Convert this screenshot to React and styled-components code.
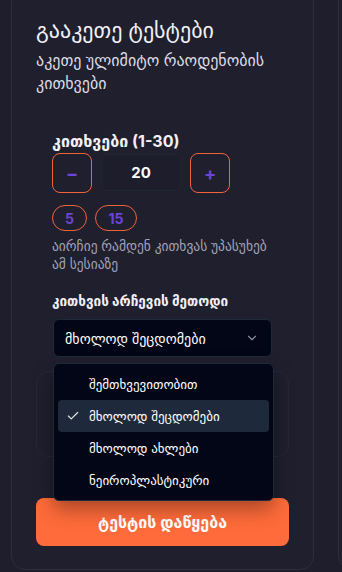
import React, { useState } from 'react';
import styled, { createGlobalStyle } from 'styled-components';

const colors = {
  page: '#1e1e2d',
  card: '#1f1f2e',
  cardBorder: '#2d2d40',
  text: '#f1f1f5',
  muted: '#a3a3b5',
  orange: '#ff6b3a',
  orangeBorder: '#f0643a',
  purple: '#6c44d8',
  field: '#020617',
  fieldBorder: '#1e293b',
  itemActive: '#1e293b',
};

const GlobalStyle = createGlobalStyle`
  * { box-sizing: border-box; }
  html, body {
    margin: 0;
    padding: 0;
    background: ${colors.page};
    font-family: Inter, "DejaVu Sans", sans-serif;
    color: ${colors.text};
    overflow: hidden;
  }
`;

const PageWrapper = styled.div`
  display: flex;
  gap: 24px;
  padding: 0 0 0 11px;
  width: 342px;
  height: 572px;
  overflow: hidden;
`;

const Card = styled.section`
  flex: 0 0 303px;
  margin-top: -12px;
  height: 582px;
  background: ${colors.card};
  border: 1px solid ${colors.cardBorder};
  border-radius: 14px;
  padding: 27px 24px 0;
`;

const Title = styled.h2`
  margin: 0;
  font-size: 22px;
  line-height: 28px;
  font-weight: 400;
  color: ${colors.text};
`;

const Subtitle = styled.p`
  margin: 5px 0 0;
  font-size: 16px;
  line-height: 23px;
  color: #dcdce6;
`;

const Section = styled.div`
  padding: 0 16px;
  margin-top: 36px;
`;

const Label = styled.div`
  font-size: 16px;
  font-weight: 700;
  line-height: 20px;
  color: ${colors.text};
`;

const StepperRow = styled.div`
  display: flex;
  gap: 9px;
  margin-top: 2px;
`;

const StepButton = styled.button`
  width: 40px;
  height: 40px;
  border: 1px solid ${colors.orangeBorder};
  border-radius: 8px;
  background: transparent;
  color: ${colors.purple};
  font-family: Inter, sans-serif;
  font-size: 18px;
  font-weight: 700;
  display: flex;
  align-items: center;
  justify-content: center;
  padding: 0;
`;

const CountBox = styled.div`
  width: 80px;
  height: 37px;
  margin-top: 1px;
  border: 1px solid #1f2636;
  border-radius: 7px;
  background: #1d1d2c;
  display: flex;
  align-items: center;
  justify-content: center;
  font-family: Inter, sans-serif;
  font-weight: 700;
  font-size: 15px;
  color: #fff;
`;

const ChipRow = styled.div`
  display: flex;
  gap: 8px;
  margin-top: 12px;
`;

const Chip = styled.button`
  height: 26px;
  padding: 0 12px;
  min-width: ${(p) => (p.$wide ? '42px' : '34px')};
  border: 1px solid ${colors.orangeBorder};
  border-radius: 13px;
  background: transparent;
  color: ${colors.purple};
  font-family: Inter, sans-serif;
  font-weight: 700;
  font-size: 14px;
`;

const Help = styled.p`
  margin: 6px 0 0;
  font-size: 13.5px;
  line-height: 18px;
  color: ${colors.muted};
`;

const MethodLabel = styled(Label)`
  font-size: 13.5px;
  margin-top: 18px;
`;

const SelectWrap = styled.div`
  position: relative;
  margin-top: 8px;
`;

const Trigger = styled.div`
  height: 38px;
  margin-left: 1px;
  width: 219px;
  background: ${colors.field};
  border: 1px solid ${colors.fieldBorder};
  border-radius: 6px;
  display: flex;
  align-items: center;
  justify-content: space-between;
  padding: 0 12px 0 11px;
  font-size: 14px;
  color: #fff;
`;

const Popover = styled.ul`
  position: absolute;
  top: 44px;
  left: 1px;
  width: 221px;
  margin: 0;
  padding: 4px;
  list-style: none;
  background: ${colors.field};
  border: 1px solid ${colors.fieldBorder};
  border-radius: 6px;
  box-shadow: 0 8px 20px rgba(0, 0, 0, 0.35);
  z-index: 5;
`;

const Item = styled.li`
  height: 32px;
  display: flex;
  align-items: center;
  padding-left: 31px;
  position: relative;
  border-radius: 4px;
  font-size: 13px;
  color: #fff;
  background: ${(p) => (p.$active ? colors.itemActive : 'transparent')};
`;

const Check = styled.span`
  position: absolute;
  left: 8px;
  top: 9px;
  display: flex;
`;

const HiddenBox = styled.div`
  margin-top: 14px;
  height: 86px;
  border: 1px solid #272738;
  border-radius: 12px;
  background: ${colors.card};
`;

const StartButton = styled.button`
  display: block;
  width: 100%;
  height: 48px;
  margin-top: 41px;
  border: none;
  border-radius: 8px;
  background: ${colors.orange};
  color: #fff;
  font-family: Inter, "DejaVu Sans", sans-serif;
  font-size: 16px;
  font-weight: 700;
`;

const SideCard = styled.div`
  flex: 0 0 300px;
  margin-top: -12px;
  height: 582px;
  border: 1px solid ${colors.cardBorder};
  border-radius: 14px;
  background: ${colors.card};
`;

const Chevron = () => (
  <svg width="14" height="14" viewBox="0 0 24 24" fill="none" stroke="#8a8fa0" strokeWidth="2" strokeLinecap="round" strokeLinejoin="round">
    <path d="m6 9 6 6 6-6" />
  </svg>
);

const CheckIcon = () => (
  <svg width="14" height="14" viewBox="0 0 24 24" fill="none" stroke="#e5e7eb" strokeWidth="2" strokeLinecap="round" strokeLinejoin="round">
    <path d="M20 6 9 17l-5-5" />
  </svg>
);

const methods = ['შემთხვევითობით', 'მხოლოდ შეცდომები', 'მხოლოდ ახლები', 'ნეიროპლასტიკური'];

export default function App() {
  const [count, setCount] = useState(20);
  const [method] = useState(1);

  return (
    <>
      <GlobalStyle />
      <PageWrapper>
        <Card>
          <Title>გააკეთე ტესტები</Title>
          <Subtitle>აკეთე ულიმიტო რაოდენობის კითხვები</Subtitle>
          <Section>
            <Label>კითხვები (1-30)</Label>
            <StepperRow>
              <StepButton onClick={() => setCount((c) => Math.max(1, c - 1))}>−</StepButton>
              <CountBox>{count}</CountBox>
              <StepButton onClick={() => setCount((c) => Math.min(30, c + 1))}>+</StepButton>
            </StepperRow>
            <ChipRow>
              <Chip onClick={() => setCount(5)}>5</Chip>
              <Chip $wide onClick={() => setCount(15)}>15</Chip>
            </ChipRow>
            <Help>აირჩიე რამდენ კითხვას უპასუხებ ამ სესიაზე</Help>
            <MethodLabel>კითხვის არჩევის მეთოდი</MethodLabel>
            <SelectWrap>
              <Trigger>
                <span>{methods[method]}</span>
                <Chevron />
              </Trigger>
              <Popover>
                {methods.map((m, i) => (
                  <Item key={m} $active={i === method}>
                    {i === method && (
                      <Check>
                        <CheckIcon />
                      </Check>
                    )}
                    {m}
                  </Item>
                ))}
              </Popover>
            </SelectWrap>
          </Section>
          <HiddenBox />
          <StartButton>ტესტის დაწყება</StartButton>
        </Card>
        <SideCard />
      </PageWrapper>
    </>
  );
}
